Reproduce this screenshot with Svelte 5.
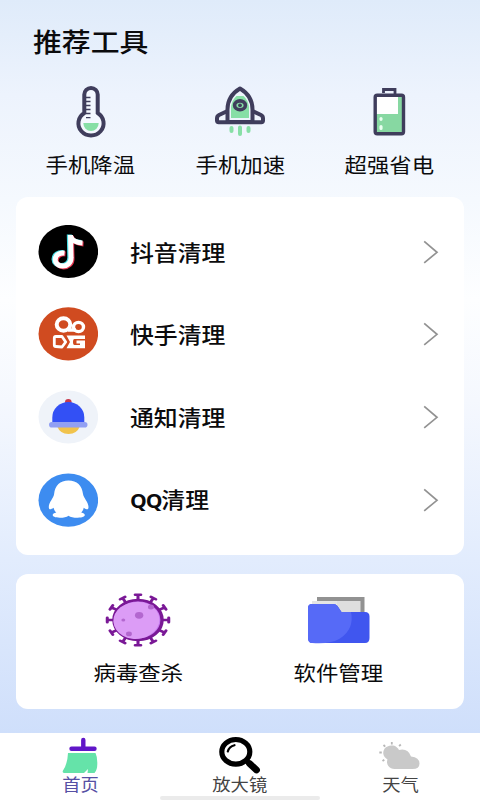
<script lang="ts">
  const apps = [
    { id: 'douyin', label: '抖音清理' },
    { id: 'kuaishou', label: '快手清理' },
    { id: 'notice', label: '通知清理' },
    { id: 'qq', prefix: 'QQ', label: '清理' }
  ];

  // spike directions around the virus body, in degrees
  const spikes = [0, 30, 60, 90, 120, 150, 180, 210, 240, 270, 300, 330];

  let activeTab = $state('home');
</script>

<div class="page">
  <main>
    <h1><span class="wide">推荐工具</span></h1>

    <section class="tools">
      <button type="button" class="tool">
        <svg width="34" height="56" viewBox="74 84 34 56">
          <path d="M84.3 113V94.6a6.7 6.7 0 0 1 13.4 0V113a12.6 12.2 0 1 1-13.4 0z" fill="#f4f8ff" stroke="#3f3d5c" stroke-width="4" />
          <path d="M83.3 123h15.4a7.7 8 0 0 1-15.4 0z" fill="#87dfa6" />
          <path d="M86 97.5h4.5M86 101.500h4.5M86 105.500h4.5M86 109.500h4.5M86 113.500h4.5M86 117.700h4.5" stroke="#3f3d5c" stroke-width="1.3" />
        </svg>
        <span class="wide">手机降温</span>
      </button>
      <button type="button" class="tool">
        <svg width="56" height="56" viewBox="212 84 56 56">
          <path d="M227.500 121.500V108q0-11 12.500-19 12.500 8 12.500 19v13.500z" fill="#edf4fc" />
          <path d="M231 118V107q1-7 5.500-11h7q4.500 4 5.500 11v11z" fill="#87dfa6" />
          <path d="M227.500 122v-12.500C227.500 99 234 92 240 88.500c6 3.500 12.500 10.500 12.500 21V122z" fill="none" stroke="#3f3d5c" stroke-width="4" stroke-linejoin="round" />
          <path d="M227.500 111l-8.500 4q-2 1-2 3.500v2q0 1.700 1.700 1.700h42.600q1.700 0 1.700-1.700v-2q0-2.500-2-3.500l-8.500-4" fill="none" stroke="#3f3d5c" stroke-width="4" stroke-linejoin="round" />
          <ellipse cx="240" cy="105.300" rx="5.400" ry="4.400" fill="#87dfa6" stroke="#3f3d5c" stroke-width="3.600" />
          <circle cx="240" cy="105.300" r="1.900" fill="#3f3d5c" />
          <path d="M231.500 128v3M240 127.500v6.500M248.500 128v3" stroke="#87dfa6" stroke-width="4" stroke-linecap="round" />
        </svg>
        <span class="wide">手机加速</span>
      </button>
      <button type="button" class="tool">
        <svg width="40" height="56" viewBox="369 84 40 56">
          <path d="M383.500 93v-3.500h11.500V94" fill="none" stroke="#3f3d5c" stroke-width="2.800" />
          <rect x="375.200" y="95.200" width="28.300" height="38.500" rx="2" fill="#fff" />
          <path d="M376 114h22V95.500h6.500V133H376z" fill="#87d8a2" />
          <rect x="375.200" y="95.200" width="28.300" height="38.500" rx="2" fill="none" stroke="#3f3d5c" stroke-width="3.400" />
          <path d="M381 118.500v.8M381 126.500v2" stroke="#e9fff0" stroke-width="3.200" stroke-linecap="round" />
        </svg>
        <span class="wide">超强省电</span>
      </button>
    </section>

    <section class="card apps">
      {#each apps as app (app.id)}
        <button type="button" class="app-row">
          {#if app.id === 'douyin'}
            <svg class="logo" viewBox="38 225 60 54">
              <ellipse cx="68.300" cy="251.500" rx="29.800" ry="26.600" fill="#000" />
              <g fill="none" stroke-width="5">
                <path d="M70.500 235l.5 22.500c.3 5.500-4 8.500-8.300 8.500-4.500 0-7.500-3-7.500-6.300 0-4.200 4-7.200 9.300-6.700M70.500 236.500q2.500 6 12 6.500" stroke="#46dbe3" transform="translate(-1.200 -.5)" />
                <path d="M70.500 235l.5 22.500c.3 5.500-4 8.500-8.300 8.500-4.500 0-7.500-3-7.500-6.300 0-4.200 4-7.200 9.300-6.700M70.500 236.500q2.500 6 12 6.500" stroke="#e5354f" transform="translate(1 .9)" />
                <path d="M70.500 235l.5 22.500c.3 5.500-4 8.500-8.300 8.500-4.500 0-7.500-3-7.500-6.300 0-4.200 4-7.200 9.300-6.700M70.500 236.500q2.500 6 12 6.500" stroke="#fff" />
              </g>
            </svg>
          {:else if app.id === 'kuaishou'}
            <svg class="logo" viewBox="38 307.500 60 54">
              <ellipse cx="68.300" cy="334.300" rx="29.800" ry="26.600" fill="#d04b20" />
              <g fill="none" stroke="#fff">
                <ellipse cx="63.500" cy="325" rx="6.800" ry="6.200" stroke-width="4" />
                <ellipse cx="78.500" cy="327.500" rx="5" ry="4.600" stroke-width="3.400" />
                <path d="M68 330.500h8" stroke-width="3.500" />
                <path d="M54.300 338.500q0-1.500 1.500-1.500h6.200l3.700 5.500-3.700 5-6.200-.5q-1.500 0-1.500-1.500z" stroke-width="2.800" stroke-linejoin="round" />
              </g>
              <path d="M66.500 336h18.500v3.500H74.500q-1.500 0-1.500 3t1.500 3h5.500V344h-3.500v-3H85v7.800H66.500l3.500-6.300z" fill="#fff" />
            </svg>
          {:else if app.id === 'notice'}
            <svg class="logo" viewBox="38 390 60 54">
              <ellipse cx="68.300" cy="417" rx="29.800" ry="26.600" fill="#eff3f9" />
              <ellipse cx="68.300" cy="402" rx="3.300" ry="3" fill="#c73a4c" />
              <path d="M57 426h23q-3 8-11.500 8T57 426z" fill="#f1c34c" />
              <path d="M52.300 423v-5.500a16 15.500 0 0 1 32 0v5.500z" fill="#3350f5" />
              <rect x="49" y="422" width="38.500" height="5.600" rx="2.800" fill="#92a0f3" />
            </svg>
          {:else}
            <svg class="logo" viewBox="38 472.500 60 54">
              <ellipse cx="68.300" cy="499.700" rx="29.800" ry="26.600" fill="#3d8cf0" />
              <path d="M68.500 480c8.500 0 13.500 5 14.500 13.500.5 3.500 5.500 8.500 5.500 13 0 3-1.500 3-4.800.8-.5 2.700-1.500 3.700-2.500 4.700 5.500 1.200 5 5.200-3.500 5.200-4.500 0-7-.5-9.200-2-2.200 1.500-4.500 2-8.700 2-8.500 0-9-4-3.500-5.200-1.200-1-2.200-2.500-2.700-4.700-3.300 2.200-4.800 2-4.800-.8 0-4.500 5-9.500 5.300-13C55 485 60 480 68.500 480z" fill="#fff" />
            </svg>
          {/if}
          <span class="app-name"><span class="wide">{#if app.prefix}<span class="latin">{app.prefix}</span>{/if}{app.label}</span></span>
          <svg class="chevron" width="16" height="24" viewBox="0 0 16 24">
            <path d="M1.200 1.300L14 12.300 1.200 22.800" fill="none" stroke="#929292" stroke-width="1.700" />
          </svg>
        </button>
      {/each}
    </section>

    <section class="card extras">
      <button type="button" class="extra">
        <svg width="68" height="56" viewBox="104.500 592 68 56">
          <g transform="translate(138.500 620) scale(1.130 .93)">
            {#each spikes as angle}
              <path d="M20 0h7.200M27.200-2.500v5" transform="rotate({angle})" fill="none" stroke="#7a1896" stroke-width="2.700" stroke-linecap="round" />
            {/each}
            <circle r="21.300" fill="#c77af0" stroke="#7a1896" stroke-width="3" />
            <path d="M-8-18a19.700 19.700 0 1 0 19 33.500A19.700 19.700 0 0 0 10-16.800 19.700 19.700 0 0 0-8-18z" fill="#dc9cf6" />
            <circle cx="1" cy="-5" r="3.700" fill="#b367cf" />
            <circle cx="-13" cy="0" r="1.700" fill="#b367cf" />
            <circle cx="-8" cy="15" r="2.600" fill="#b367cf" />
            <circle cx="11.500" cy="-14" r="2.700" fill="#b367cf" />
          </g>
        </svg>
        <span class="wide">病毒查杀</span>
      </button>
      <button type="button" class="extra">
        <svg width="68" height="56" viewBox="304 592 68 56">
          <path d="M317 597h47.500v20H317z" fill="#929292" />
          <path d="M319 601h41.500v16H319z" fill="#dedede" />
          <path d="M312 601h25v10h-25z" fill="#e5e5e5" />
          <path d="M308 608q0-4 4-4h21q3 0 4.500 2l4 6h23.500q4.500 0 4.500 4.500V638q0 5-4.500 5h-52.500q-4.500 0-4.500-5z" fill="#4056ef" />
          <path d="M308 608q0-4 4-4h21q3 0 4.500 2l4 6H351q3.500 17-11 26.500-9.500 6-28 4.500-4 0-4-5z" fill="#566af7" />
        </svg>
        <span class="wide">软件管理</span>
      </button>
    </section>
  </main>

  <nav>
    <button type="button" class="tab" class:active={activeTab === 'home'} onclick={() => (activeTab = 'home')}>
      <svg width="44" height="38" viewBox="58 736 44 38">
        <path d="M68 753h27.500q2 4 1.800 11 0 6-2.800 9h-7l.5-4-4 4H64q-2-.3-1-2.500 4.500-6.500 5-17.500z" fill="#65e3a9" />
        <path d="M83.300 740v8M71.500 748.800h23" stroke="#6016c8" stroke-width="4.400" stroke-linecap="round" />
      </svg>
      <span class="wide">首页</span>
    </button>
    <button type="button" class="tab" class:active={activeTab === 'magnifier'} onclick={() => (activeTab = 'magnifier')}>
      <svg width="44" height="38" viewBox="218 736 44 38">
        <ellipse cx="235.800" cy="751.800" rx="14" ry="12.300" fill="none" stroke="#000" stroke-width="5.200" />
        <path d="M245.500 760.500l3 2.500" stroke="#000" stroke-width="4.500" />
        <path d="M249.500 763.500l7 6.500" stroke="#000" stroke-width="6.800" stroke-linecap="round" />
        <path d="M227.800 751.500q1.200-5 6.700-6.300" fill="none" stroke="#000" stroke-width="2.200" stroke-linecap="round" />
      </svg>
      <span class="wide">放大镜</span>
    </button>
    <button type="button" class="tab" class:active={activeTab === 'weather'} onclick={() => (activeTab = 'weather')}>
      <svg width="44" height="38" viewBox="378.500 736 44 38">
        <path d="M395 769a7.500 7 0 0 1-7-9.500 8.200 7.500 0 1 1 11.500-9.500q9-2 12 6.500 8.500 1 8.500 7 0 5.500-7 5.500z" fill="#c9c9c9" />
        <path d="M392.300 742v2.500M384 745l1.700 1.700M401.300 744.500l-1.700 1.700M379.800 752.500h2.500M383 761l1.800-1.300" stroke="#b8b8b8" stroke-width="1.800" />
      </svg>
      <span class="wide">天气</span>
    </button>
    <div class="home-bar"></div>
  </nav>
</div>

<style>
  :global(body) {
    margin: 0;
  }

  .page {
    height: 800px;
    display: flex;
    flex-direction: column;
    overflow: hidden;
    color: #0b0b0d;
    font-family: "Noto Sans", "Noto Sans CJK SC", sans-serif;
    background: linear-gradient(#dfebfa 0, #edf3fd 95px, #f5f9fe 200px, #fdfeff 300px, #f5f8fe 400px, #e2ecfd 560px, #cfdffb 733px);
  }

  button {
    border: none;
    background: none;
    padding: 0;
    margin: 0;
    color: inherit;
    font: inherit;
    cursor: pointer;
  }

  svg {
    display: block;
    flex: none;
  }

  .wide {
    display: inline-block;
    white-space: nowrap;
    transform: scaleX(1.11);
  }

  main {
    flex: 1;
    padding: 0 16px;
  }

  h1 {
    margin: 0;
    padding: 22px 0 0 17px;
    font-size: 26px;
    line-height: 40px;
    font-weight: 500;
  }

  h1 .wide,
  .app-name .wide {
    transform-origin: left;
  }

  .tools {
    display: grid;
    grid-template-columns: repeat(3, 1fr);
    padding-top: 22px;
    height: 113px;
  }

  .tool,
  .extra {
    display: flex;
    flex-direction: column;
    align-items: center;
    font-size: 20.200px;
    line-height: 30px;
  }

  .tool {
    gap: 10px;
  }

  .card {
    background: #fff;
    border-radius: 12px;
  }

  .apps {
    height: 358px;
    padding: 13.500px 0 14px;
    box-sizing: border-box;
    display: flex;
    flex-direction: column;
  }

  .app-row {
    flex: 1;
    display: flex;
    align-items: center;
    padding: 0 25px 0 22px;
    text-align: left;
  }

  .logo {
    width: 60px;
    height: 54px;
  }

  .app-name {
    flex: 1;
    padding: 2px 0 0 32px;
    font-size: 21.500px;
    line-height: 30px;
    font-weight: 500;
  }

  .latin {
    font-family: "Open Sans", "Noto Sans", sans-serif;
    font-size: 19px;
    font-weight: 700;
    letter-spacing: -1px;
  }

  .extras {
    margin-top: 19px;
    height: 135px;
    display: grid;
    grid-template-columns: 200px 200px;
    padding-left: 22px;
  }

  .extra {
    padding-top: 18px;
    gap: 10px;
  }

  nav {
    position: relative;
    height: 67px;
    background: #fff;
    display: grid;
    grid-template-columns: repeat(3, 1fr);
  }

  .tab {
    display: flex;
    flex-direction: column;
    align-items: center;
    padding-top: 3px;
    font-size: 16.500px;
    line-height: 22px;
    color: #444;
  }

  .tab.active {
    color: #5650a4;
  }

  .home-bar {
    position: absolute;
    left: 160px;
    bottom: 0;
    width: 160px;
    height: 4px;
    border-radius: 2px;
    background: #ebebeb;
  }
</style>
